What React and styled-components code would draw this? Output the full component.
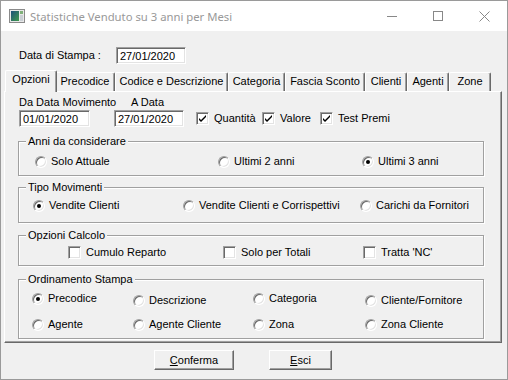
import styled, { createGlobalStyle } from "styled-components";

const face = "#f0f0f0";
const shadow = "#a0a0a0";
const darkShadow = "#696969";
const light = "#e3e3e3";
const uiFont = `"Liberation Sans", Arial, sans-serif`;

const GlobalStyle = createGlobalStyle`
  html, body {
    margin: 0;
    padding: 0;
    background: #fff;
  }
  body {
    width: 508px;
    height: 380px;
    overflow: hidden;
  }
`;

const Window = styled.div`
  box-sizing: border-box;
  width: 508px;
  height: 380px;
  border: 1px solid #9a9a9a;
  display: flex;
  flex-direction: column;
  font-family: ${uiFont};
  font-size: 11px;
  color: #000;
`;

const TitleBar = styled.div`
  height: 30px;
  flex-shrink: 0;
  background: #fff;
  display: flex;
  align-items: center;
  padding-left: 8px;
`;

const TitleText = styled.span`
  flex: 1;
  margin-left: 5px;
  font-family: "Noto Sans", "Open Sans", sans-serif;
  font-size: 11.3px;
  color: #999;
  white-space: nowrap;
`;

const CaptionButton = styled.div`
  width: 46px;
  height: 30px;
  display: flex;
  align-items: center;
  justify-content: center;
`;

const Client = styled.div`
  flex: 1;
  background: ${face};
  display: flex;
  flex-direction: column;
`;

const Header = styled.div`
  display: flex;
  align-items: center;
  padding: 16px 0 0 18px;
`;

const HeaderLabel = styled.span`
  width: 97px;
  line-height: 13px;
`;

const TextBox = styled.input`
  box-sizing: border-box;
  width: ${(p) => p.$w}px;
  height: 17px;
  margin: 0;
  padding: 1px 0 0 3px;
  background: #fff;
  border: 1px solid;
  border-color: ${shadow} #fff #fff ${shadow};
  box-shadow: inset 1px 1px 0 ${darkShadow}, inset -1px -1px 0 ${light};
  font-family: ${uiFont};
  font-size: 11px;
  line-height: 13px;
  color: #000;
  outline: none;
`;

const TabArea = styled.div`
  margin: 6px 0 0 3px;
  width: 498px;
`;

const TabStrip = styled.div`
  display: flex;
  align-items: flex-end;
  height: 21px;
  padding-left: 3px;
`;

const Tab = styled.div`
  box-sizing: border-box;
  flex-shrink: 0;
  width: ${(p) => p.$w}px;
  height: ${(p) => (p.$active ? 22 : 19)}px;
  margin: ${(p) => (p.$active ? "0 -2px -1px" : "0")};
  padding-top: 2px;
  line-height: 13px;
  text-align: center;
  white-space: nowrap;
  background: ${face};
  border-top: 1px solid #fff;
  border-left: 1px solid #fff;
  border-right: 1px solid ${darkShadow};
  box-shadow: inset -1px 0 0 ${shadow};
  border-radius: 2px 2px 0 0;
  position: relative;
  z-index: ${(p) => (p.$active ? 2 : 1)};
`;

const Panel = styled.div`
  box-sizing: border-box;
  height: 252px;
  background: ${face};
  border-top: 1px solid #fff;
  border-left: 1px solid #fff;
  border-right: 1px solid ${darkShadow};
  border-bottom: 1px solid ${darkShadow};
  box-shadow: inset -1px -1px 0 ${shadow};
  padding: 4px 0 0 13px;
  display: flex;
  flex-direction: column;
`;

const DateGrid = styled.div`
  display: grid;
  grid-template-columns: 95px 82px auto;
  grid-template-rows: 13px 17px;
  row-gap: 1px;
  padding-left: 1px;
  align-items: center;
`;

const SmallLabel = styled.span`
  line-height: 13px;
  white-space: nowrap;
  padding-left: ${(p) => p.$indent || 0}px;
`;

const CheckRow = styled.div`
  display: grid;
  grid-template-columns: 66px 58px auto;
  align-items: center;
`;

const GroupBox = styled.fieldset`
  box-sizing: border-box;
  width: 466px;
  min-width: 0;
  margin: ${(p) => p.$mt}px 0 0;
  padding: 0;
  border: 1px solid ${shadow};
  box-shadow: inset 1px 1px 0 #fff, 1px 1px 0 #fff;
`;

const Legend = styled.legend`
  margin-left: 7px;
  padding: 0 2px 0 2px;
  line-height: 13px;
  background: ${face};
`;

const Options = styled.div`
  display: grid;
  grid-template-columns: ${(p) => p.$cols};
  grid-auto-rows: 13px;
  row-gap: 13px;
  align-items: start;
  padding: ${(p) => p.$pt}px 0 ${(p) => p.$pb}px ${(p) => p.$pl}px;
`;

const Option = styled.label`
  display: flex;
  align-items: center;
  gap: ${(p) => (p.$radio ? 4 : 5)}px;
  height: 13px;
  line-height: 13px;
  margin-top: ${(p) => p.$drop || 0}px;
  white-space: nowrap;
`;

const RadioMark = styled.span`
  box-sizing: border-box;
  width: 12px;
  height: 12px;
  flex-shrink: 0;
  border-radius: 50%;
  background: #fff;
  border: 1px solid;
  border-color: ${shadow} #fff #fff ${shadow};
  box-shadow: inset 1px 1px 0 ${darkShadow}, inset -1px -1px 0 ${light};
  display: flex;
  align-items: center;
  justify-content: center;

  &::after {
    content: "";
    width: 4px;
    height: 4px;
    border-radius: 50%;
    background: ${(p) => (p.$on ? "#000" : "transparent")};
  }
`;

const CheckMark = styled.span`
  box-sizing: border-box;
  width: 13px;
  height: 13px;
  flex-shrink: 0;
  background: #fff;
  border: 1px solid;
  border-color: ${shadow} #fff #fff ${shadow};
  box-shadow: inset 1px 1px 0 ${darkShadow}, inset -1px -1px 0 ${light};
  display: flex;
  align-items: center;
  justify-content: center;
`;

const ButtonRow = styled.div`
  display: flex;
  gap: 35px;
  padding: 7px 0 0 153px;
`;

const Button = styled.div`
  box-sizing: border-box;
  width: ${(p) => p.$w}px;
  height: 20px;
  background: ${face};
  border-top: 1px solid #fff;
  border-left: 1px solid #fff;
  border-right: 1px solid ${darkShadow};
  border-bottom: 1px solid ${darkShadow};
  box-shadow: inset -1px -1px 0 ${shadow};
  display: flex;
  align-items: center;
  justify-content: center;
  line-height: 13px;

  u {
    text-decoration: underline;
  }
`;

const Radio = ({ on, drop, children }) => (
  <Option $radio $drop={drop}>
    <RadioMark $on={on} />
    {children}
  </Option>
);

const Check = ({ on, children }) => (
  <Option>
    <CheckMark>
      {on && (
        <svg width="9" height="9" viewBox="0 0 9 9">
          <path d="M1 4 L3 6 L8 1 L8 3 L3 8 L1 6 Z" fill="#000" />
        </svg>
      )}
    </CheckMark>
    {children}
  </Option>
);

const AppIcon = () => (
  <svg width="16" height="14" viewBox="0 0 16 14">
    <defs>
      <linearGradient id="ic" x1="0" y1="0" x2="1" y2="1">
        <stop offset="0" stopColor="#1d4f7a" />
        <stop offset="1" stopColor="#3f9a4c" />
      </linearGradient>
    </defs>
    <rect x="0.5" y="0.5" width="15" height="13" fill="#e8e8e8" stroke="#8a8a8a" />
    <rect x="2" y="2" width="8" height="10" fill="url(#ic)" />
    <rect x="11" y="2" width="3" height="3" fill="#7fb07a" />
    <rect x="11" y="6" width="3" height="6" fill="#c9cfd4" />
  </svg>
);

const tabs = [
  ["Opzioni", 52],
  ["Precodice", 60],
  ["Codice e Descrizione", 113],
  ["Categoria", 57],
  ["Fascia Sconto", 80],
  ["Clienti", 42],
  ["Agenti", 42],
  ["Zone", 42],
];

const App = () => (
  <>
    <GlobalStyle />
    <Window>
      <TitleBar>
        <AppIcon />
        <TitleText>Statistiche Venduto su 3 anni per Mesi</TitleText>
        <CaptionButton>
          <svg width="10" height="10" viewBox="0 0 10 10">
            <path d="M0 5.5 H10" stroke="#888" strokeWidth="1" />
          </svg>
        </CaptionButton>
        <CaptionButton>
          <svg width="10" height="10" viewBox="0 0 10 10">
            <rect x="0.5" y="0.5" width="9" height="9" fill="none" stroke="#888" />
          </svg>
        </CaptionButton>
        <CaptionButton>
          <svg width="11" height="11" viewBox="0 0 11 11">
            <path d="M0.5 0.5 L10.5 10.5 M10.5 0.5 L0.5 10.5" stroke="#888" strokeWidth="1" />
          </svg>
        </CaptionButton>
      </TitleBar>

      <Client>
        <Header>
          <HeaderLabel>Data di Stampa :</HeaderLabel>
          <TextBox $w={70} defaultValue="27/01/2020" readOnly />
        </Header>

        <TabArea>
          <TabStrip>
            {tabs.map(([name, w], i) => (
              <Tab key={name} $w={w} $active={i === 0}>
                {name}
              </Tab>
            ))}
          </TabStrip>

          <Panel>
            <DateGrid>
              <SmallLabel>Da Data Movimento</SmallLabel>
              <SmallLabel $indent={17}>A Data</SmallLabel>
              <span />
              <TextBox $w={71} defaultValue="01/01/2020" readOnly />
              <TextBox $w={70} defaultValue="27/01/2020" readOnly />
              <CheckRow>
                <Check on>Quantità</Check>
                <Check on>Valore</Check>
                <Check on>Test Premi</Check>
              </CheckRow>
            </DateGrid>

            <GroupBox $mt={8}>
              <Legend>Anni da considerare</Legend>
              <Options $cols="183px 144px auto" $pt={7} $pb={7} $pl={16}>
                <Radio>Solo Attuale</Radio>
                <Radio>Ultimi 2 anni</Radio>
                <Radio on>Ultimi 3 anni</Radio>
              </Options>
            </GroupBox>

            <GroupBox $mt={5}>
              <Legend>Tipo Movimenti</Legend>
              <Options $cols="150px 177px auto" $pt={5} $pb={10} $pl={14}>
                <Radio on>Vendite Clienti</Radio>
                <Radio>Vendite Clienti e Corrispettivi</Radio>
                <Radio>Carichi da Fornitori</Radio>
              </Options>
            </GroupBox>

            <GroupBox $mt={6}>
              <Legend>Opzioni Calcolo</Legend>
              <Options $cols="155px 140px auto" $pt={4} $pb={6} $pl={49}>
                <Check>Cumulo Reparto</Check>
                <Check>Solo per Totali</Check>
                <Check>Tratta 'NC'</Check>
              </Options>
            </GroupBox>

            <GroupBox $mt={7}>
              <Legend>Ordinamento Stampa</Legend>
              <Options $cols="101px 120px 112px auto" $pt={6} $pb={7} $pl={13}>
                <Radio on>Precodice</Radio>
                <Radio drop={2}>Descrizione</Radio>
                <Radio>Categoria</Radio>
                <Radio drop={2}>Cliente/Fornitore</Radio>
                <Radio>Agente</Radio>
                <Radio>Agente Cliente</Radio>
                <Radio>Zona</Radio>
                <Radio>Zona Cliente</Radio>
              </Options>
            </GroupBox>
          </Panel>
        </TabArea>

        <ButtonRow>
          <Button $w={80}>
            <span>
              <u>C</u>onferma
            </span>
          </Button>
          <Button $w={63}>
            <span>
              <u>E</u>sci
            </span>
          </Button>
        </ButtonRow>
      </Client>
    </Window>
  </>
);

export default App;
